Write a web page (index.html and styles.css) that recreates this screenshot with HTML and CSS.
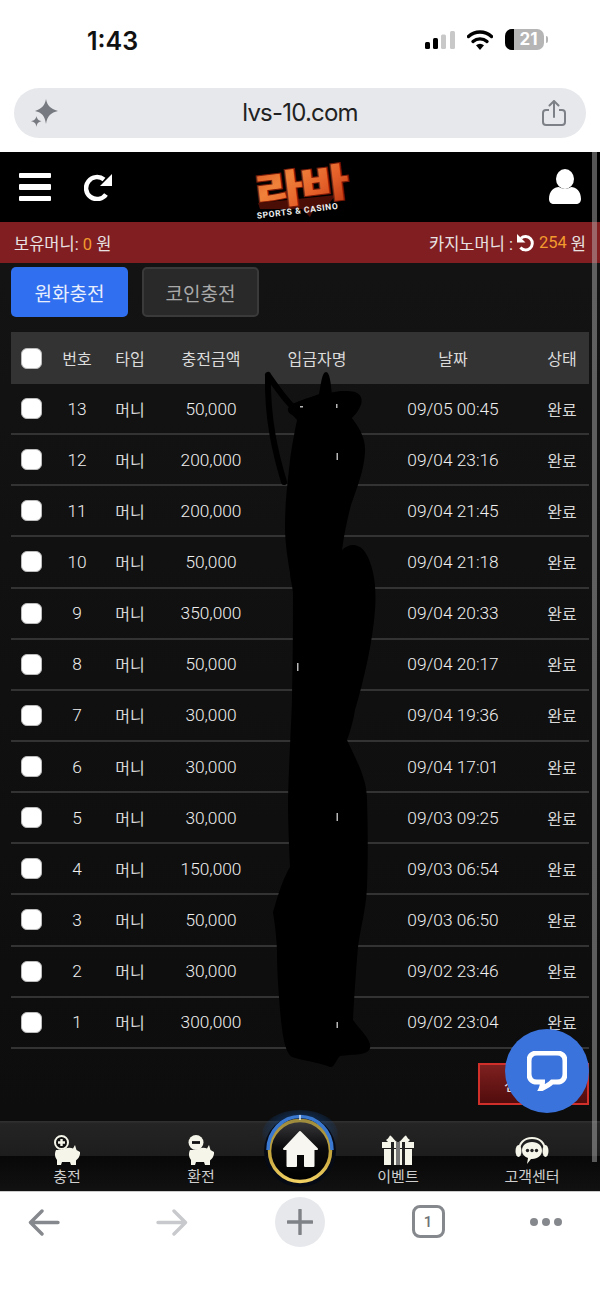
FILE: index.html
```html
<!DOCTYPE html>
<html lang="ko">
<head>
<meta charset="utf-8">
<title>lvs-10.com</title>
<link rel="stylesheet" href="styles.css">
</head>
<body>
<div class="phone">
  <div class="status">
    <span class="time">1:43</span>
    <div class="status-icons">
      <svg class="sig" width="30" height="18" viewBox="0 0 30 18"><rect x="0" y="11" width="5" height="7" rx="1.5" fill="#000"/><rect x="8" y="7" width="5" height="11" rx="1.5" fill="#000"/><rect x="16" y="3.500" width="5" height="14.500" rx="1.500" fill="#c8c8c8"/><rect x="25" y="0" width="5" height="18" rx="1.500" fill="#c8c8c8"/></svg>
      <svg class="wifi" width="26" height="20" viewBox="0 0 26 20"><path d="M1.500 6.500C8 .5 18 .5 24.500 6.500" fill="none" stroke="#000" stroke-width="3.400" stroke-linecap="round"/><path d="M6 11.500c4-3.500 10-3.500 14 0" fill="none" stroke="#000" stroke-width="3.400" stroke-linecap="round"/><path d="M9 15.300c2.500-2 5.500-2 8 0L13 20z" fill="#000"/></svg>
      <div class="battery"><span class="batt-fill"></span><span class="batt-num">21</span><span class="batt-tip"></span></div>
    </div>
  </div>
  <div class="urlwrap">
    <div class="urlbar">
      <svg width="27" height="28" viewBox="0 0 27 28"><path d="M15 0c1.200 6.500 4 9.500 12 12-7 1.500-10.800 5-12 13-1.200-8-4-11.500-11-13 7-2.500 9.800-5.500 11-12z" fill="#777a80"/><path d="M5.500 17c.5 2.800 1.500 4.200 5 5.300-3.300.8-4.500 2.200-5 5.700-.5-3.500-1.800-4.900-5.500-5.700 3.700-1.100 5-2.500 5.500-5.300z" fill="#777a80"/></svg>
      <span class="url">lvs-10.com</span>
      <svg width="24" height="26" viewBox="0 0 24 26"><path d="M7 10H4a3 3 0 0 0-3 3v9a3 3 0 0 0 3 3h16a3 3 0 0 0 3-3v-9a3 3 0 0 0-3-3h-3" fill="none" stroke="#7d8187" stroke-width="2"/><path d="M12 17V2M7.500 5.500 12 1l4.500 4.500" fill="none" stroke="#7d8187" stroke-width="2" stroke-linecap="round"/></svg>
    </div>
  </div>

  <main class="site">
    <header class="head">
      <div class="head-left">
        <div class="burger"><i></i><i></i><i></i></div>
        <svg width="28" height="28" viewBox="0 0 28 28"><path d="M22 21.500A11 11 0 1 1 20 6.500" fill="none" stroke="#fff" stroke-width="4.500"/><path d="M28 1v12H16z" fill="#fff"/></svg>
      </div>
      <svg class="logo" width="102" height="56" viewBox="0 0 102 56">
        <defs><linearGradient id="lava" x1="0" y1="0" x2="1" y2="1"><stop offset="0" stop-color="#d9501f"/><stop offset=".35" stop-color="#f0813a"/><stop offset=".65" stop-color="#e4602a"/><stop offset="1" stop-color="#b8320f"/></linearGradient></defs>
        <path d="M6 40 84 32 74 44 62 46 58 54 50 46 8 46z" fill="#4a0e06"/>
        <g transform="rotate(-7 50 26) translate(3 38) scale(1.14 .85)"><text class="logo-main" x="0" y="0">라바</text></g>
        <text class="logo-sub" x="2" y="50" transform="rotate(-7 50 26)">SPORTS &amp; CASINO</text>
      </svg>
      <svg width="32" height="36" viewBox="0 0 32 36"><ellipse cx="16" cy="10" rx="9" ry="10" fill="#fff"/><path d="M0 30c0-8 5-12 10-12 3 2 9 2 12 0 5 0 10 4 10 12 0 3-2 5-5 5H5c-3 0-5-2-5-5z" fill="#fff"/></svg>
    </header>

    <div class="money">
      <span>보유머니: <b>0</b> 원</span>
      <span class="casino">카지노머니 :
        <svg width="18" height="18" viewBox="0 0 16 16"><path d="M3.500 3.800A6 6 0 1 1 3 12" fill="none" stroke="#fff" stroke-width="2.600"/><path d="M0 0v7.500h7.500z" fill="#fff"/></svg>
        <b>254</b> 원</span>
    </div>

    <div class="content">
      <div class="tabs">
        <a class="tab tab-on">원화충전</a>
        <a class="tab tab-off">코인충전</a>
      </div>

      <div class="table">
        <div class="row row-head">
          <span><input type="checkbox" class="cb"></span><span>번호</span><span>타입</span><span>충전금액</span><span>입금자명</span><span>날짜</span><span>상태</span>
        </div>
        <div class="row"><span><input type="checkbox" class="cb"></span><span class="n">13</span><span>머니</span><span class="n">50,000</span><span></span><span class="n">09/05 00:45</span><span>완료</span></div>
        <div class="row"><span><input type="checkbox" class="cb"></span><span class="n">12</span><span>머니</span><span class="n">200,000</span><span></span><span class="n">09/04 23:16</span><span>완료</span></div>
        <div class="row"><span><input type="checkbox" class="cb"></span><span class="n">11</span><span>머니</span><span class="n">200,000</span><span></span><span class="n">09/04 21:45</span><span>완료</span></div>
        <div class="row"><span><input type="checkbox" class="cb"></span><span class="n">10</span><span>머니</span><span class="n">50,000</span><span></span><span class="n">09/04 21:18</span><span>완료</span></div>
        <div class="row"><span><input type="checkbox" class="cb"></span><span class="n">9</span><span>머니</span><span class="n">350,000</span><span></span><span class="n">09/04 20:33</span><span>완료</span></div>
        <div class="row"><span><input type="checkbox" class="cb"></span><span class="n">8</span><span>머니</span><span class="n">50,000</span><span></span><span class="n">09/04 20:17</span><span>완료</span></div>
        <div class="row"><span><input type="checkbox" class="cb"></span><span class="n">7</span><span>머니</span><span class="n">30,000</span><span></span><span class="n">09/04 19:36</span><span>완료</span></div>
        <div class="row"><span><input type="checkbox" class="cb"></span><span class="n">6</span><span>머니</span><span class="n">30,000</span><span></span><span class="n">09/04 17:01</span><span>완료</span></div>
        <div class="row"><span><input type="checkbox" class="cb"></span><span class="n">5</span><span>머니</span><span class="n">30,000</span><span></span><span class="n">09/03 09:25</span><span>완료</span></div>
        <div class="row"><span><input type="checkbox" class="cb"></span><span class="n">4</span><span>머니</span><span class="n">150,000</span><span></span><span class="n">09/03 06:54</span><span>완료</span></div>
        <div class="row"><span><input type="checkbox" class="cb"></span><span class="n">3</span><span>머니</span><span class="n">50,000</span><span></span><span class="n">09/03 06:50</span><span>완료</span></div>
        <div class="row"><span><input type="checkbox" class="cb"></span><span class="n">2</span><span>머니</span><span class="n">30,000</span><span></span><span class="n">09/02 23:46</span><span>완료</span></div>
        <div class="row"><span><input type="checkbox" class="cb"></span><span class="n">1</span><span>머니</span><span class="n">300,000</span><span></span><span class="n">09/02 23:04</span><span>완료</span></div>
      </div>

      <div class="actions"><a class="del">선택삭제</a></div>
    </div>

    <nav class="tabbar">
      <a class="nav-item">
        <svg width="26" height="30" viewBox="0 0 26 30"><path d="M8 15c3-2 8-3 11-1.500L21 10l1.500 5 3.500 2c.5 4-2 7-4 8.500V30h-5l-1-3H8l-1 3H3v-5C.5 22 .5 18 2 15z" fill="#f6f5ea"/><circle cx="7.500" cy="7.500" r="6.500" fill="#111" stroke="#f6f5ea" stroke-width="2"/><path d="M4 7.500h7M7.500 4v7" stroke="#f6f5ea" stroke-width="2.400"/></svg>
        <span>충전</span>
      </a>
      <a class="nav-item">
        <svg width="26" height="30" viewBox="0 0 26 30"><path d="M8 15c3-2 8-3 11-1.500L21 10l1.500 5 3.500 2c.5 4-2 7-4 8.500V30h-5l-1-3H8l-1 3H3v-5C.5 22 .5 18 2 15z" fill="#f6f5ea"/><circle cx="8" cy="7.500" r="7.500" fill="#f6f5ea"/><path d="M4 7.500h8" stroke="#111" stroke-width="2.800"/></svg>
        <span>환전</span>
      </a>
      <span class="nav-gap"></span>
      <a class="nav-item">
        <svg width="32" height="30" viewBox="0 0 32 30"><path d="M15 7C12 5 10 1 8 .5L6 3.500 4 5l2 2zM17 7c3-2 5-6 7-6.500L26 3.500 28 5l-2 2z" fill="#f6f5ea"/><rect x="0" y="7" width="32" height="6" fill="#f6f5ea"/><rect x="2" y="14" width="28" height="16" fill="#f6f5ea"/><rect x="9" y="7" width="3" height="23" fill="#222"/><rect x="14" y="7" width="4" height="23" fill="#777"/><rect x="20" y="7" width="3" height="23" fill="#222"/></svg>
        <span>이벤트</span>
      </a>
      <a class="nav-item">
        <svg width="34" height="28" viewBox="0 0 34 28"><path d="M4 14C4 6 9 1 17 1s13 5 13 13" fill="none" stroke="#f6f5ea" stroke-width="2"/><ellipse cx="3.500" cy="14" rx="3" ry="6" fill="#f6f5ea"/><ellipse cx="30.500" cy="14" rx="3" ry="6" fill="#f6f5ea"/><path d="M17 5c6.500 0 10 4 10 8.500S23 22 17 22h-1l-4 5 1-6c-4-1.500-6-4-6-7.500C7 9 10.500 5 17 5z" fill="#f6f5ea"/><circle cx="12.500" cy="13.500" r="1.700" fill="#222"/><circle cx="17" cy="13.500" r="1.700" fill="#222"/><circle cx="21.500" cy="13.500" r="1.700" fill="#222"/></svg>
        <span>고객센터</span>
      </a>
      <svg class="home" width="76" height="78" viewBox="0 0 76 78">
        <defs>
          <linearGradient id="gold" x1="0" y1="0" x2="0" y2="1"><stop offset="0" stop-color="#a08c3e"/><stop offset=".6" stop-color="#c9a93f"/><stop offset="1" stop-color="#f0cf63"/></linearGradient>
          <radialGradient id="glow" cx=".5" cy=".42" r=".55"><stop offset="0" stop-color="#14498f"/><stop offset="1" stop-color="#14498f" stop-opacity="0"/></radialGradient>
          <linearGradient id="disc" x1="0" y1="0" x2="0" y2="1"><stop offset="0" stop-color="#3a3a3e"/><stop offset=".45" stop-color="#0a0a0c"/><stop offset="1" stop-color="#000"/></linearGradient>
        </defs>
        <ellipse cx="38" cy="24" rx="38" ry="24" fill="url(#glow)"/>
        <circle cx="38" cy="41" r="36" fill="#050a14"/>
        <circle cx="38" cy="41" r="30.500" fill="url(#disc)" stroke="url(#gold)" stroke-width="3.500"/>
        <path d="M6 40A32 33.500 0 0 1 70 40" fill="none" stroke="#3b78d0" stroke-width="3.500"/>
        <path d="M38 5v5" stroke="#dbe8f8" stroke-width="1.500"/>
        <path d="M38 22 55 39h-3.500v17H43V44h-9v12h-8.500V39H22z" fill="#f7f6f0" stroke="#f7f6f0" stroke-width="2" stroke-linejoin="round"/>
      </svg>
    </nav>
  </main>

  <footer class="browser">
    <svg width="32" height="27" viewBox="0 0 32 27"><path d="M30 13.500H3M14 2 2.500 13.500 14 25" fill="none" stroke="#85888d" stroke-width="3.400" stroke-linecap="round" stroke-linejoin="round"/></svg>
    <svg width="32" height="27" viewBox="0 0 32 27"><path d="M2 13.500h27M18 2l11.500 11.500L18 25" fill="none" stroke="#c8c9cc" stroke-width="3.400" stroke-linecap="round" stroke-linejoin="round"/></svg>
    <div class="plus"><svg width="26" height="26" viewBox="0 0 26 26"><path d="M13 1v24M1 13h24" stroke="#7f8287" stroke-width="3.400" stroke-linecap="round"/></svg></div>
    <div class="tabcount">1</div>
    <div class="dots"><i></i><i></i><i></i></div>
  </footer>

  <!-- redaction scribble drawn on the screenshot -->
  <svg class="scribble" width="600" height="1300" viewBox="0 0 600 1300">
    <path d="M297 420C292 413 287 414 288 408C294 402 310 398 319 394C321 384 322 372 326 372C330 372 331 385 332 394C340 390 350 390 356 395C360 401 354 410 350 416C358 425 366 438 365 452C364 470 358 485 351 505C347 520 344 535 342 550C348 544 358 542 365 552C373 564 377 585 375 610C373 640 364 680 355 710C353 722 350 732 347 740C356 760 367 778 367 800C368 830 368 860 367 887C366 910 360 930 358 947C356 970 354 1000 353 1020C360 1030 372 1040 370 1048C368 1056 352 1054 340 1056C336 1060 334 1068 330 1067C318 1062 300 1060 292 1057C284 1052 282 1030 280 1010C278 985 277 970 277 950C276 930 274 918 273 913C275 905 282 880 290 867C289 845 288 820 288 800C289 760 291 730 292 700C293 660 293 620 293 593C292 583 290 578 290 573C287 555 285 540 285 527C285 500 288 480 290 460C292 445 295 430 297 420z" fill="#000"/>
    <path d="M268 375C267 420 276 455 284 482M268 375C275 385 285 400 294 408" fill="none" stroke="#000" stroke-width="6" stroke-linecap="round"/>
    <path d="M290 408C310 398 340 392 352 394S360 408 346 420" fill="none" stroke="#000" stroke-width="5"/>
    <g fill="#b8b8b8"><rect x="300" y="406" width="3" height="1.500"/><rect x="336" y="404" width="1.500" height="4"/><rect x="336.500" y="453" width="1.500" height="7"/><rect x="297" y="663" width="1.500" height="8"/><rect x="336.500" y="813" width="1.500" height="8"/><rect x="336.500" y="1022" width="1.500" height="6"/></g>
  </svg>

  <div class="scrollbar"></div>

  <a class="chat">
    <svg width="40" height="40" viewBox="0 0 40 40"><path d="M10 2h20c5 0 8 3 8 8v13c0 5-3 8-8 8h-5c-3 3-7 5-11 7 1-2 1.500-4 1.500-7H10c-5 0-8-3-8-8V10c0-5 3-8 8-8z" fill="none" stroke="#fff" stroke-width="5"/></svg>
  </a>
</div>
</body>
</html>
```
FILE: styles.css
```css
* { box-sizing: border-box; }
html, body { margin: 0; padding: 0; background: #fff; }
body { font-family: Roboto, "Noto Sans CJK KR", sans-serif; }

.phone {
  position: relative;
  width: 600px;
  height: 1300px;
  overflow: hidden;
  display: flex;
  flex-direction: column;
}

/* status bar */
.status {
  height: 88px;
  flex: none;
  display: flex;
  justify-content: space-between;
  align-items: flex-start;
  padding: 26px 56px 0 87px;
}
.time { font: 600 25px/30px Inter, Roboto, sans-serif; color: #111; }
.status-icons { display: flex; align-items: center; gap: 12px; padding-top: 3px; }
.battery {
  position: relative;
  width: 39px;
  height: 21px;
  border-radius: 7px;
  background: #b5b5b5;
  overflow: visible;
}
.batt-fill { position: absolute; left: 0; top: 0; bottom: 0; width: 9px; background: #000; border-radius: 7px 0 0 7px; }
.batt-num {
  position: absolute; left: 8px; right: 0; top: 0;
  text-align: center;
  font: 700 17px/21px Inter, Roboto, sans-serif;
  color: #fff;
}
.batt-tip { position: absolute; right: -4px; top: 7px; width: 2px; height: 7px; border-radius: 0 2px 2px 0; background: #b5b5b5; }

/* url bar */
.urlwrap { height: 64px; flex: none; padding: 0 14px; }
.urlbar {
  height: 50px;
  border-radius: 25px;
  background: #e7e8ec;
  display: flex;
  align-items: center;
  justify-content: space-between;
  padding: 0 20px 0 17px;
}
.url { font: 400 24px/50px Inter, Roboto, sans-serif; letter-spacing: -.8px; color: #222; }

/* site */
.site {
  position: relative;
  flex: none;
  height: 1039px;
  display: flex;
  flex-direction: column;
  background: #111;
  color: #ddd;
}
.head {
  height: 70px;
  flex: none;
  background: #000;
  display: flex;
  align-items: center;
  justify-content: space-between;
  padding: 0 19px 0 19px;
  position: relative;
}
.head-left { display: flex; align-items: center; gap: 33px; }
.burger { width: 32px; display: flex; flex-direction: column; gap: 6px; }
.burger i { display: block; height: 5.500px; background: #fff; border-radius: 1px; }
.logo { position: absolute; left: 252px; top: 11px; overflow: visible; }
.logo-main {
  font: 900 46px/1 "Noto Sans CJK KR", sans-serif;
  fill: url(#lava);
  stroke: #7a1c08;
  stroke-width: 2.500;
  paint-order: stroke;
  letter-spacing: -2px;
}
.logo-sub { font: 700 8.500px Roboto, sans-serif; fill: #eee; letter-spacing: .6px; }

.money {
  height: 41px;
  flex: none;
  background: #801e21;
  display: flex;
  align-items: center;
  justify-content: space-between;
  padding: 0 14px;
  font-size: 16.500px;
  color: #e9e2e2;
}
.money b { font-weight: 400; color: #f39a2e; }
.casino { display: flex; align-items: center; gap: 4px; }

.content {
  flex: 1;
  padding: 4px 11px 0;
  background: linear-gradient(#131313, #0d0d0d);
}
.tabs { display: flex; gap: 14px; }
.tab {
  width: 117px;
  height: 50px;
  border-radius: 5px;
  display: flex;
  align-items: center;
  justify-content: center;
  font-size: 19px;
}
.tab-on { background: #2f6ff0; color: #e8eefc; }
.tab-off { background: #292929; border: 2px solid #3a3a3a; color: #a9a9a9; }

.table { margin-top: 15px; }
.row {
  display: grid;
  grid-template-columns: 40px 52px 54px 108px 104px 168px 50px;
  height: 51.150px;
  padding-right: 2px;
  border-bottom: 2px solid #333;
  align-items: center;
  text-align: center;
  font-size: 16px;
  color: #d8d8d8;
}
.row-head { height: 52px; background: #333; border-bottom: 0; color: #dcdcdc; }
.n { font-size: 17.300px; font-family: Roboto, sans-serif; font-weight: 300; color: #f0f0f0; }
.cb {
  appearance: none;
  display: block;
  width: 21px;
  height: 21px;
  margin: 0 auto;
  border-radius: 6px;
  background: #fff;
  border: 1px solid #bbb;
}

.actions { display: flex; justify-content: flex-end; margin-top: 14px; }
.del {
  width: 111px;
  height: 42px;
  background: linear-gradient(#7e2020, #520c0c);
  border: 2px solid #d1302a;
  display: flex;
  align-items: center;
  justify-content: center;
  font-size: 16px;
  color: #e8e0e0;
}

/* bottom nav */
.tabbar {
  position: relative;
  flex: none;
  height: 70px;
  display: grid;
  grid-template-columns: 134px 134px 64px 132px 136px;
  background: linear-gradient(#323232 0, #242424 4%, #1d1d1d 50%, #080808 50%, #111 100%);
}
.nav-item {
  display: flex;
  flex-direction: column;
  align-items: center;
  justify-content: flex-end;
  height: 70px;
  padding-bottom: 3px;
  font-size: 15px;
  line-height: 22px;
  color: #cfcfcf;
}
.nav-item svg { margin-bottom: 1px; }
.home { position: absolute; left: 262px; top: -11px; }

/* browser bar */
.browser {
  position: relative;
  flex: 1;
  display: grid;
  grid-template-columns: 88px 168px 88px 168px 68px;
  justify-items: center;
  align-items: start;
  padding-top: 5px;
  background: #fff;
  border-top: 1px solid #ccc;
}
.browser > svg { margin-top: 12px; }
.plus {
  width: 50px;
  height: 50px;
  border-radius: 50%;
  background: #e7e8ec;
  display: flex;
  align-items: center;
  justify-content: center;
}
.tabcount {
  width: 33px;
  height: 33px;
  margin-top: 8px;
  border: 3.500px solid #85888d;
  border-radius: 8px;
  display: flex;
  align-items: center;
  justify-content: center;
  font: 500 15px Roboto, sans-serif;
  color: #6f7277;
}
.dots { display: flex; gap: 4px; margin-top: 21px; }
.dots i { display: block; width: 8px; height: 8px; border-radius: 50%; background: #85888d; }

/* overlays */
.scribble { position: absolute; left: 0; top: 0; pointer-events: none; }
.scrollbar {
  position: absolute;
  left: 592px;
  top: 152px;
  width: 5px;
  height: 1010px;
  background: rgba(190, 190, 190, .45);
}
.chat {
  position: absolute;
  left: 505px;
  top: 1029px;
  width: 84px;
  height: 84px;
  border-radius: 50%;
  background: #3b73dd;
  display: flex;
  align-items: center;
  justify-content: center;
}
```
